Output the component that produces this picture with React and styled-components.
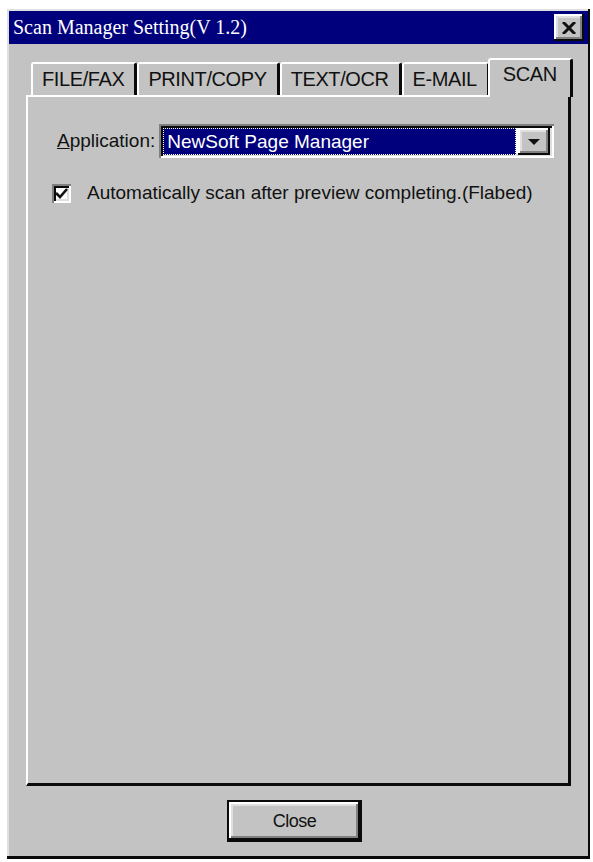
import React from "react";
import styled, { createGlobalStyle, css } from "styled-components";

const GlobalStyle = createGlobalStyle`
  html, body {
    margin: 0;
    padding: 0;
    background: #ffffff;
  }
  body {
    font-family: "Liberation Sans", Arial, sans-serif;
  }
`;

const raised = css`
  box-shadow: inset -2px -2px #0a0a0a, inset 2px 2px #ffffff,
    inset -4px -4px #808080, inset 4px 4px #dfdfdf;
`;

const sunken = css`
  box-shadow: inset 2px 2px #808080, inset -2px -2px #ffffff,
    inset 4px 4px #0a0a0a, inset -4px -4px #dfdfdf;
`;

const Page = styled.div`
  padding: 9px 3px 3px 7px;
`;

const Window = styled.div`
  height: 850px;
  box-sizing: border-box;
  background: #c3c3c3;
  padding: 2px 2px 3px 2px;
  display: flex;
  flex-direction: column;
  box-shadow: inset -2px -3px #0a0a0a, inset 2px 2px #dfdfdf;
`;

const TitleBar = styled.div`
  height: 33px;
  background: #00007d;
  display: flex;
  align-items: center;
  justify-content: space-between;
  padding: 0 4px 0 4px;
`;

const Title = styled.span`
  font-family: "Liberation Serif", "Times New Roman", serif;
  font-size: 20px;
  color: #ffffff;
`;

const TitleButton = styled.button`
  width: 30px;
  height: 27px;
  padding: 0;
  border: none;
  background: #c3c3c3;
  display: flex;
  align-items: center;
  justify-content: center;
  ${raised};
`;

const Body = styled.div`
  flex: 1;
  display: flex;
  flex-direction: column;
  padding: 14px 17px 0 17px;
`;

const Tabs = styled.div`
  display: flex;
  align-items: flex-end;
  height: 37px;
  padding-left: 5px;
  position: relative;
  z-index: 1;
`;

const Tab = styled.div`
  flex-shrink: 0;
  white-space: nowrap;
  font-size: 20px;
  letter-spacing: -0.4px;
  color: #111;
  height: ${(p) => (p.$active ? "39px" : "33px")};
  margin: ${(p) => (p.$active ? "0 -2px -2px -2px" : "0")};
  padding: ${(p) => (p.$active ? "3px 13px 0 13px" : "4px 10px 0 9px")};
  box-sizing: border-box;
  background: #c3c3c3;
  border-top: 2px solid #ffffff;
  border-left: 2px solid #ffffff;
  border-right: 3px solid #0a0a0a;
  border-radius: 3px 3px 0 0;
  position: relative;
  z-index: ${(p) => (p.$active ? 2 : 0)};
`;

const Panel = styled.div`
  flex: 1;
  background: #c3c3c3;
  border-top: 2px solid #ffffff;
  border-left: 2px solid #ffffff;
  border-right: 3px solid #0a0a0a;
  border-bottom: 3px solid #0a0a0a;
  padding: 27px 14px 0 29px;
  display: flex;
  flex-direction: column;
  gap: 24px;
`;

const Row = styled.div`
  display: flex;
  align-items: center;
  gap: 4px;
`;

const Label = styled.span`
  font-size: 19px;
  color: #111;
`;

const Combo = styled.div`
  width: 396px;
  height: 34px;
  box-sizing: border-box;
  background: #ffffff;
  padding: 4px 4px 3px 4px;
  display: flex;
  gap: 2px;
  ${sunken};
`;

const ComboValue = styled.div`
  flex: 1;
  background: #00007d;
  color: #ffffff;
  font-size: 19px;
  display: flex;
  align-items: center;
  padding-left: 4px;
  outline: 1px dotted #ffffff;
  outline-offset: -1px;
`;

const DropButton = styled.div`
  width: 32px;
  background: #c3c3c3;
  display: flex;
  align-items: center;
  justify-content: center;
  ${raised};
`;

const CheckRow = styled.label`
  display: flex;
  align-items: center;
  gap: 16px;
  margin-left: -5px;
  font-size: 19px;
  color: #111;
`;

const CheckBox = styled.span`
  width: 19px;
  height: 19px;
  background: #ffffff;
  display: flex;
  align-items: center;
  justify-content: center;
  ${sunken};
`;

const Footer = styled.div`
  display: flex;
  justify-content: center;
  padding: 14px 8px 14px 0;
`;

const Button = styled.button`
  width: 135px;
  height: 42px;
  font-family: "Liberation Sans", Arial, sans-serif;
  font-size: 18px;
  letter-spacing: -0.5px;
  color: #111;
  background: #c3c3c3;
  border: 2px solid #0a0a0a;
  padding: 0;
  ${raised};
`;

const tabs = ["FILE/FAX", "PRINT/COPY", "TEXT/OCR", "E-MAIL", "SCAN"];

export default function App() {
  return (
    <Page>
      <GlobalStyle />
      <Window>
        <TitleBar>
          <Title>Scan Manager Setting(V 1.2)</Title>
          <TitleButton aria-label="Close">
            <svg width="14" height="12" viewBox="0 0 14 12">
              <path d="M1 0 L13 12 M13 0 L1 12" stroke="#111" strokeWidth="3" />
            </svg>
          </TitleButton>
        </TitleBar>
        <Body>
          <Tabs>
            {tabs.map((t) => (
              <Tab key={t} $active={t === "SCAN"}>
                {t}
              </Tab>
            ))}
          </Tabs>
          <Panel>
            <Row>
              <Label>
                <u>A</u>pplication:
              </Label>
              <Combo>
                <ComboValue>NewSoft Page Manager</ComboValue>
                <DropButton>
                  <svg width="12" height="6" viewBox="0 0 12 6">
                    <path d="M0 0 H12 L6 6 Z" fill="#111" />
                  </svg>
                </DropButton>
              </Combo>
            </Row>
            <CheckRow>
              <CheckBox>
                <svg width="13" height="11" viewBox="0 0 13 11">
                  <path d="M1 5 L5 9 L12 1" stroke="#111" strokeWidth="2.6" fill="none" />
                </svg>
              </CheckBox>
              <span>Automatically scan after preview completing.(Flabed)</span>
            </CheckRow>
          </Panel>
          <Footer>
            <Button>Close</Button>
          </Footer>
        </Body>
      </Window>
    </Page>
  );
}
